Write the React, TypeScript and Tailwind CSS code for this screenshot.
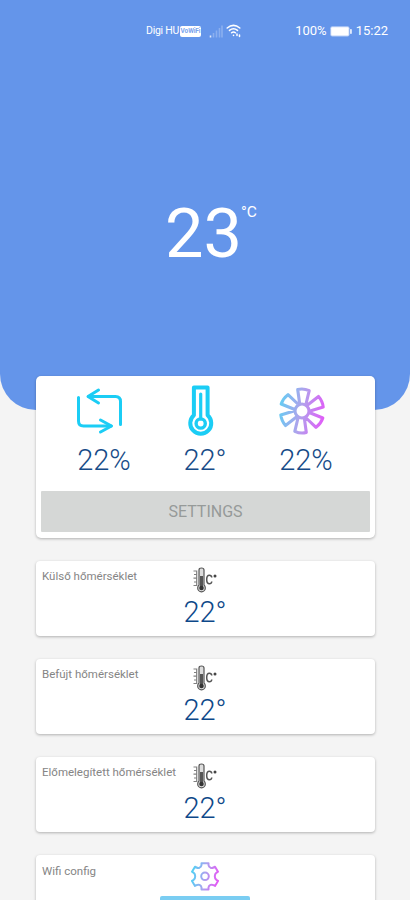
import type { ReactNode } from "react"

const sensors = [
  { label: "Külső hőmérséklet", value: "22°" },
  { label: "Befújt hőmérséklet", value: "22°" },
  { label: "Előmelegített hőmérséklet", value: "22°" },
]

function SignalIcon() {
  return (
    <svg width="14" height="13" viewBox="0 0 14 13" stroke="#fff" strokeWidth="1.6">
      <path d="M1.5 10.5v2" opacity=".8" />
      <path d="M4.5 8v4.5M7.5 5.5v7M10.5 3v9.5M13 .5v12" opacity=".25" />
    </svg>
  )
}

function WifiIcon() {
  return (
    <svg width="16" height="14" viewBox="0 0 16 14" fill="none" stroke="#fff" strokeWidth="1.5" strokeLinecap="round">
      <path d="M1.2 4Q7.5-1.3 13.8 4M3.5 6.4q4-3.3 8 0M5.6 8.8q1.9-1.6 3.8 0" />
      <path d="M7.5 11.2v.2M11 10v1.5M13.5 11v1.5" />
    </svg>
  )
}

function BatteryIcon() {
  return (
    <svg width="22" height="11" viewBox="0 0 22 11" fill="#fff">
      <rect x=".3" y=".3" width="19.2" height="10.2" rx="2" opacity=".55" />
      <rect x="1.2" y="1.2" width="17.4" height="8.4" rx="1" />
      <rect x="20.2" y="3" width="1.5" height="5" rx=".7" />
    </svg>
  )
}

function LoopIcon() {
  return (
    <svg
      className="overflow-visible"
      width="48"
      height="48"
      viewBox="0 0 48 48"
      fill="none"
      stroke="#1bcdf5"
      strokeWidth="3"
      strokeLinecap="round"
      strokeLinejoin="round"
    >
      <path d="M2.500 11.500V35q0 5 5 5h27.500" />
      <path d="M24.500 34l11 6-11 6" />
      <path d="M12.500 10.500h27q5 0 5 5V38.500" />
      <path d="M22.500 4L12 10.500l10.500 6.500" />
    </svg>
  )
}

function ThermometerIcon() {
  return (
    <svg
      className="overflow-visible"
      width="48"
      height="48"
      viewBox="0.5 0.5 48 48"
      fill="none"
      stroke="#1bcdf5"
      strokeWidth="4"
      strokeLinejoin="round"
    >
      <path d="M17.400 2h13.700v27.800a10.500 10.500 0 1 1-13.700 0z" />
      <circle cx="24.200" cy="38" r="4.600" strokeWidth="3.400" />
      <path d="M24.200 8.500v25" strokeWidth="3.200" strokeLinecap="round" />
    </svg>
  )
}

function FanIcon() {
  return (
    <svg
      className="overflow-visible"
      width="48"
      height="48"
      viewBox="0 0 48 48"
      fill="none"
      stroke="url(#fan)"
      strokeWidth="3.100"
      strokeLinejoin="round"
    >
      <defs>
        <linearGradient id="fan" gradientUnits="userSpaceOnUse" x1="1" y1="20" x2="47" y2="28">
          <stop offset="0" stopColor="#65cdf3" />
          <stop offset=".48" stopColor="#b0a2ec" />
          <stop offset="1" stopColor="#e15cf8" />
        </linearGradient>
      </defs>
      <circle cx="24" cy="25" r="7" />
      <path
        d="M21.700 18L19.700 3.500Q25.500 2 31.200 4.700L28 18
        M28.900 19.500L40.500 10.500Q44.500 15 45.200 21.100L32.100 25
        M31.200 26.500L44.800 32Q43 37.500 38 41.400L28.100 32
        M26.300 32L28.300 46.500Q22.500 48 16.800 45.300L20 32
        M19.100 30.500L7.500 39.500Q3.500 35 2.800 28.900L15.900 25
        M16.800 23.500L3.200 18Q5 12.500 10 8.600L19.900 18"
      />
    </svg>
  )
}

function CelsiusIcon() {
  return (
    <svg width="24" height="26" viewBox="0 0 24 26" fill="none" stroke="#555" strokeWidth="1.200">
      <path d="M.5 4h3.200v14.500H.5M1 7.500h2.700M.5 11.200h3.200M1 15h2.700" opacity=".75" />
      <path
        d="M6 3q0-2 2.500-2T11 3v15q1.300 1 1.300 3a3.800 3.800 0 0 1-7.600 0q0-2 1.300-3z"
        fill="#ddd"
      />
      <path d="M8.500 9v11" strokeWidth="3" />
      <circle cx="8.500" cy="21" r="2.300" fill="#333" stroke="none" />
      <path d="M18.800 10.500q-.3-2.200-2.400-2.200-2.700 0-2.700 4.200t2.700 4.200q2.100 0 2.400-2.200" strokeWidth="1.500" />
      <circle cx="22" cy="9" r="1.500" fill="#444" stroke="none" />
    </svg>
  )
}

function GearIcon() {
  return (
    <svg width="28" height="29" viewBox="0 0 28 29" fill="none" stroke="url(#gear)" strokeWidth="2" strokeLinejoin="round">
      <defs>
        <linearGradient id="gear" gradientUnits="userSpaceOnUse" x1="1" y1="12" x2="27" y2="16">
          <stop offset="0" stopColor="#55cff4" />
          <stop offset=".5" stopColor="#aca1ef" />
          <stop offset="1" stopColor="#e35bf5" />
        </linearGradient>
      </defs>
      <path d="M10.500 1.200h7v2q.3 1.700 2 2.500 1.500.6 3-.2l1.500-.8 3 5-1.700 1.100q-1.500 1.200-1.500 3.500t1.500 3.500l1.700 1.100-3 5-1.500-.8q-1.500-.8-3-.2-1.700.8-2 2.500v2h-7v-2q-.3-1.700-2-2.500-1.500-.6-3 .2l-1.500.8-3-5 1.700-1.100q1.500-1.200 1.500-3.500t-1.500-3.500L1 9.700l3-5 1.500.8q1.500.8 3 .2 1.700-.8 2-2.500z" />
      <circle cx="14" cy="14.300" r="3.800" />
    </svg>
  )
}

function Reading({ icon, value }: { icon: ReactNode; value: string }) {
  return (
    <div className="flex flex-col items-center">
      <div className="mr-2 h-[48px]">{icon}</div>
      <span className="mt-[9px] ml-px text-[29px] leading-[34px] font-light text-[#174b87]">{value}</span>
    </div>
  )
}

function SensorCard({ label, value }: { label: string; value: string }) {
  return (
    <div className="grid h-[75px] grid-cols-[1fr_48px_1fr] rounded-[4px] bg-white pr-px shadow-[0_1px_3px_rgba(0,0,0,0.28)]">
      <span className="pt-[7px] pl-1.5 text-[11.500px] leading-4 whitespace-nowrap text-[#858585]">{label}</span>
      <div className="flex flex-col items-center pt-1.5">
        <CelsiusIcon />
        <span className="mt-[2px] text-[29px] leading-[34px] font-light text-[#0d4889]">{value}</span>
      </div>
    </div>
  )
}

export default function App() {
  return (
    <div className="h-[900px] w-[410px] overflow-hidden bg-[#f4f4f4] font-['Roboto',sans-serif]">
      <header className="h-[410px] rounded-b-[36px] bg-[#6495ea] text-white">
        <div className="flex items-center justify-between pt-[22px] pr-[22px] pl-[146px] leading-[18px]">
          <div className="flex items-center">
            <span className="w-[34px] text-[10.500px] tracking-[-0.25px] whitespace-nowrap">Digi HU</span>
            <span className="h-[11px] w-[21px] rounded-[2px] bg-white text-center text-[6.500px] leading-[11px] font-bold tracking-[-0.1px] text-[#7ba4ed]">
              VoWiFi
            </span>
            <div className="ml-2">
              <SignalIcon />
            </div>
            <div className="ml-[3px]">
              <WifiIcon />
            </div>
          </div>
          <div className="flex items-center text-[13px]">
            <span>100%</span>
            <div className="mr-1 ml-[3px]">
              <BatteryIcon />
            </div>
            <span>15:22</span>
          </div>
        </div>
        <div className="flex pt-[153px] pl-[165px]">
          <span className="w-[76px] text-[68.500px] leading-[82px]">23</span>
          <span className="mt-[10px] text-[15.500px] leading-[18px]">°C</span>
        </div>
      </header>

      <main className="relative -mt-[34px] flex flex-col gap-[23px] pr-[35px] pl-9">
        <section className="h-[162px] rounded-[5px] bg-white px-[5px] pt-[10px] shadow-[0_1px_3px_rgba(0,0,0,0.28)]">
          <div className="mr-[14px] ml-3 grid grid-cols-3">
            <Reading icon={<LoopIcon />} value="22%" />
            <Reading icon={<ThermometerIcon />} value="22°" />
            <Reading icon={<FanIcon />} value="22%" />
          </div>
          <button className="mt-[14px] h-[41px] w-full rounded-[1px] bg-[#d5d7d6] pt-px text-[16px] text-[#969a99]">
            SETTINGS
          </button>
        </section>

        {sensors.map((sensor) => (
          <SensorCard key={sensor.label} label={sensor.label} value={sensor.value} />
        ))}

        <div className="grid h-[75px] grid-cols-[1fr_92px_1fr] rounded-[4px] bg-white pr-px shadow-[0_1px_3px_rgba(0,0,0,0.28)]">
          <span className="pt-[8px] pl-1.5 text-[11.500px] leading-4 text-[#858585]">Wifi config</span>
          <div className="flex flex-col items-center pt-[7px]">
            <GearIcon />
            <div className="mt-[5px] h-[34px] w-[90px] rounded-[2px] bg-[#7acdf2]" />
          </div>
        </div>
      </main>
    </div>
  )
}
